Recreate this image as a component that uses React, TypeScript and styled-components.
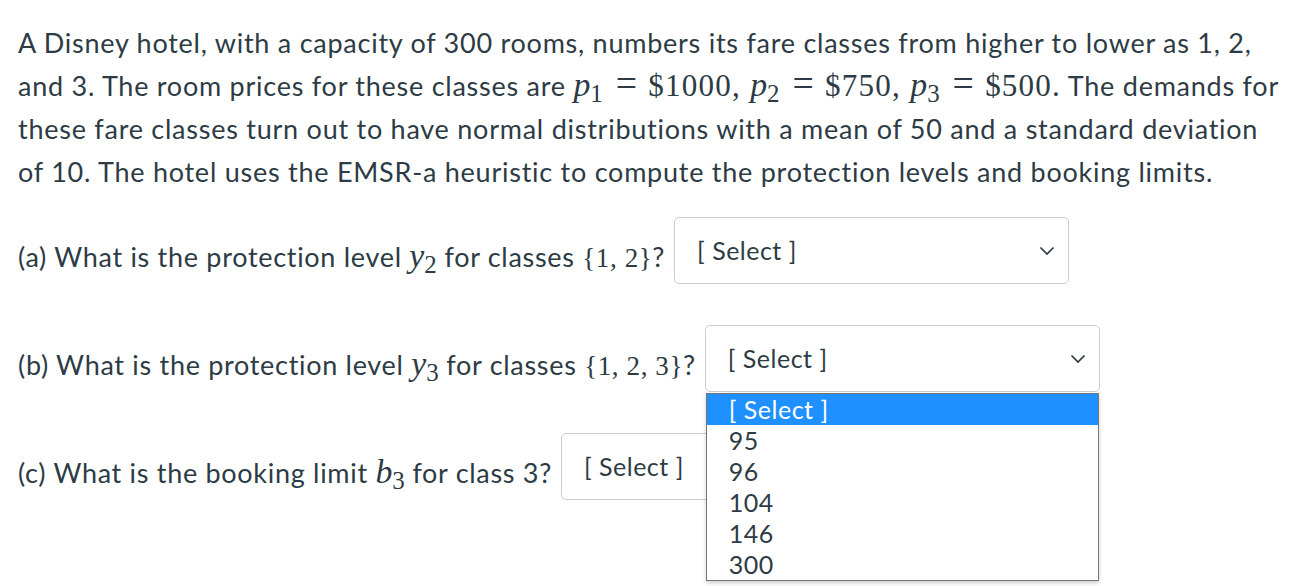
import React from "react";
import styled, { createGlobalStyle } from "styled-components";

const GlobalStyle = createGlobalStyle`
  html, body {
    margin: 0;
    padding: 0;
    background: #ffffff;
  }
  body {
    font-family: Lato, "Open Sans", sans-serif;
    color: #2d3b45;
  }
`;

const Page = styled.div`
  box-sizing: border-box;
  min-height: 100vh;
  padding: 21px 18px 0 18px;
`;

const Intro = styled.p`
  margin: 0 0 24px 0;
  font-size: 27px;
  letter-spacing: 0.75px;
  line-height: 43px;
  white-space: nowrap;
`;

const MathVar = styled.span`
  font-family: "Liberation Serif", "DejaVu Serif", serif;
  font-style: italic;
  font-size: 1.25em;
  letter-spacing: 0;
  line-height: 1;
`;

const MathNum = styled.span<{ $gap?: boolean }>`
  font-family: "Liberation Serif", "DejaVu Serif", serif;
  font-size: 1.15em;
  letter-spacing: 1.2px;
  line-height: 1;
  margin-right: ${(p) => (p.$gap ? "0.3em" : "0")};
`;

const MathSet = styled.span`
  font-family: "Liberation Serif", "DejaVu Serif", serif;
  font-size: 1em;
  letter-spacing: 0.6px;
  line-height: 1;
`;

const Sub = styled.sub`
  font-style: normal;
  font-size: 0.74em;
  vertical-align: -0.25em;
  line-height: 0;
`;

const Eq = styled.span`
  font-family: "Liberation Serif", "DejaVu Serif", serif;
  font-size: 1.4em;
  line-height: 1;
  letter-spacing: 0;
  padding: 0 0.3em 0 0.34em;
`;

const Question = styled.div`
  display: flex;
  align-items: flex-start;
  gap: 9px;
  margin-bottom: 41px;
`;

const Label = styled.span`
  font-size: 27px;
  letter-spacing: 0.7px;
  line-height: 43px;
  margin-top: 18px;
  white-space: nowrap;
`;

const SelectWrap = styled.div`
  position: relative;
  flex: none;
`;

const SelectBox = styled.div`
  box-sizing: border-box;
  width: 395px;
  height: 67px;
  border: 1px solid #c7cdd1;
  border-radius: 5px;
  background: #fff;
  display: flex;
  align-items: center;
  justify-content: space-between;
  padding: 0 13px 0 22px;
  font-size: 25px;
  letter-spacing: 0.5px;
  color: #2d3b45;
`;

const SelectText = styled.span`
  margin-top: -2px;
`;

const Chevron = () => (
  <svg width="16" height="10" viewBox="0 0 16 10" fill="none">
    <path d="M1.5 1.5 L8 8 L14.5 1.5" stroke="#2d3b45" strokeWidth="1.7" />
  </svg>
);

const Dropdown = styled.ul`
  position: absolute;
  top: calc(100% + 1px);
  left: 1px;
  width: 393px;
  box-sizing: border-box;
  margin: 0;
  padding: 0;
  list-style: none;
  background: #fff;
  border: 1px solid #767676;
  box-shadow: 0 2px 4px rgba(0, 0, 0, 0.2);
  z-index: 5;
`;

const Option = styled.li<{ $active?: boolean }>`
  height: 31px;
  line-height: 31px;
  padding-left: 22px;
  font-size: 25px;
  letter-spacing: 0.5px;
  background: ${(p) => (p.$active ? "#1e90ff" : "transparent")};
  color: ${(p) => (p.$active ? "#ffffff" : "#2d3b45")};
`;

const Sel = ({ open, options }: { open?: boolean; options?: string[] }) => (
  <SelectWrap>
    <SelectBox>
      <SelectText>[ Select ]</SelectText>
      <Chevron />
    </SelectBox>
    {open && options && (
      <Dropdown>
        {options.map((o, i) => (
          <Option key={o} $active={i === 0}>
            {o}
          </Option>
        ))}
      </Dropdown>
    )}
  </SelectWrap>
);

const P = ({ n }: { n: string }) => (
  <MathVar>
    p<Sub>{n}</Sub>
  </MathVar>
);

export default function App() {
  return (
    <Page>
      <GlobalStyle />
      <Intro>
        A Disney hotel, with a capacity of 300 rooms, numbers its fare classes from higher to lower as 1, 2,
        <br />
        and 3. The room prices for these classes are <P n="1" />
        <Eq>=</Eq>
        <MathNum $gap>$1000,</MathNum>
        <P n="2" />
        <Eq>=</Eq>
        <MathNum $gap>$750,</MathNum>
        <P n="3" />
        <Eq>=</Eq>
        <MathNum>$500.</MathNum> The demands for
        <br />
        these fare classes turn out to have normal distributions with a mean of 50 and a standard deviation
        <br />
        of 10. The hotel uses the EMSR-a heuristic to compute the protection levels and booking limits.
      </Intro>

      <Question>
        <Label>
          (a) What is the protection level{" "}
          <MathVar>
            y<Sub>2</Sub>
          </MathVar>{" "}
          for classes <MathSet>{"{1, 2}"}</MathSet>?
        </Label>
        <Sel />
      </Question>

      <Question>
        <Label>
          (b) What is the protection level{" "}
          <MathVar>
            y<Sub>3</Sub>
          </MathVar>{" "}
          for classes <MathSet>{"{1, 2, 3}"}</MathSet>?
        </Label>
        <Sel open options={["[ Select ]", "95", "96", "104", "146", "300"]} />
      </Question>

      <Question>
        <Label>
          (c) What is the booking limit{" "}
          <MathVar>
            b<Sub>3</Sub>
          </MathVar>{" "}
          for class 3?
        </Label>
        <Sel />
      </Question>
    </Page>
  );
}
